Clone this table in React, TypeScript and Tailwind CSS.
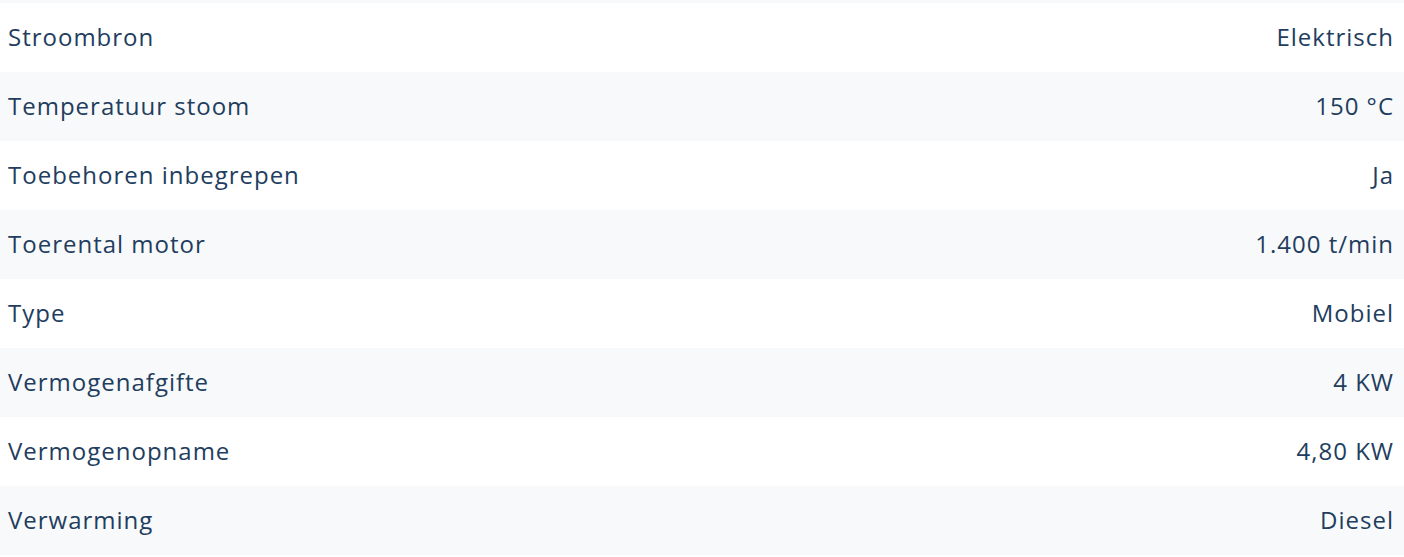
const specs: [string, string][] = [
  ["Stroombron", "Elektrisch"],
  ["Temperatuur stoom", "150 °C"],
  ["Toebehoren inbegrepen", "Ja"],
  ["Toerental motor", "1.400 t/min"],
  ["Type", "Mobiel"],
  ["Vermogenafgifte", "4 KW"],
  ["Vermogenopname", "4,80 KW"],
  ["Verwarming", "Diesel"],
];

export default function App() {
  return (
    <div className="w-[1404px] bg-white font-['Open_Sans',sans-serif] text-[#223d5e]">
      <div className="h-[3px] bg-[#f8f9fb]" />
      {specs.map(([label, value], i) => (
        <div
          key={label}
          className={`flex h-[69px] items-center justify-between pb-[2px] pl-2 pr-[10px] text-[24px] tracking-[1px] ${
            i % 2 === 1 ? "bg-[#f8f9fb]" : "bg-white"
          }`}
        >
          <span>{label}</span>
          <span>{value}</span>
        </div>
      ))}
    </div>
  );
}
